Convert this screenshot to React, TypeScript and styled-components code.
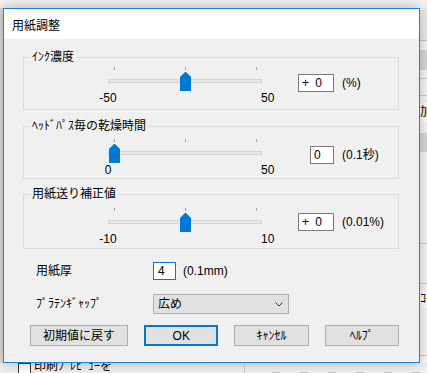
import React from "react";
import styled, { createGlobalStyle } from "styled-components";

const FONT = `"Liberation Sans", "Noto Sans CJK JP", sans-serif`;

const Global = createGlobalStyle`
  html, body { margin: 0; padding: 0; }
  body {
    width: 427px; height: 373px; overflow: hidden;
    background: #f0f0f0;
    font-family: ${FONT};
  }
`;

/* ---------- background (window behind the dialog) ---------- */
const Desktop = styled.div`
  position: relative;
  width: 427px;
  height: 373px;
  overflow: hidden;
  display: flex;
  flex-direction: column;
  background: #f0f0f0;
  font-family: ${FONT};
  font-size: 12px;
  color: #000;
`;
const TopBand = styled.div`
  flex: none;
  height: 8px;
  background: #f2f2f2;
`;
const MidRow = styled.div`
  flex: none;
  height: 355px;
  display: flex;
`;
const LeftEdge = styled.div`
  width: 3px;
  background: #dcdcdc;
`;
const Covered = styled.div`
  flex: 1;
  background: #ffffff;
`;
const RightStrip = styled.div`
  width: 7px;
  display: flex;
  flex-direction: column;
  background: #f7f7f7;
  overflow: hidden;
`;
const StripPiece = styled.div<{ $h: number; $bg?: string }>`
  flex: none;
  height: ${(p) => p.$h}px;
  background: ${(p) => p.$bg ?? "transparent"};
  font-size: 12px;
  line-height: ${(p) => p.$h}px;
  white-space: nowrap;
`;
const BottomRow = styled.div`
  flex: none;
  height: 10px;
  display: flex;
  align-items: flex-start;
  background: #f0f0f0;
`;
const CheckBox = styled.div`
  flex: none;
  width: 13px;
  height: 13px;
  margin-left: 18px;
  box-sizing: border-box;
  border: 1px solid #333;
  background: #fff;
`;
const CheckText = styled.div`
  flex: none;
  width: 210px;
  margin-left: 3px;
  margin-top: -4px;
  font-size: 12px;
  line-height: 14px;
  white-space: nowrap;
`;
const VLine = styled.div`
  flex: none;
  width: 1px;
  height: 10px;
  background: #d0d0d0;
`;
const Squares = styled.div`
  flex: none;
  display: flex;
  gap: 20px;
  margin-left: 27px;
  margin-top: 9px;
`;
const Square = styled.div`
  width: 8px;
  height: 8px;
  background: #c4c4c4;
`;

/* ---------- dialog ---------- */
const Dialog = styled.div`
  position: absolute;
  left: 3px;
  top: 8px;
  width: 417px;
  height: 355px;
  box-sizing: border-box;
  border: 1px solid #1883d7;
  background: #f0f0f0;
  box-shadow: 0 0 12px rgba(0, 0, 0, 0.28);
  display: flex;
  flex-direction: column;
`;
const TitleBar = styled.div`
  flex: none;
  height: 30px;
  background: #ffffff;
  display: flex;
  align-items: center;
  padding-left: 8px;
  font-family: "Noto Sans CJK JP", sans-serif;
  font-size: 12px;
  color: #000;
`;
const Body = styled.div`
  flex: 1;
  display: flex;
  flex-direction: column;
  padding: 10px 20px 0 19px;
`;

const Group = styled.fieldset<{ $mt: number }>`
  margin: ${(p) => p.$mt}px 0 0 0;
  padding: 0;
  min-width: 0;
  border: 1px solid #dcdcdc;
`;
const Legend = styled.legend`
  margin-left: 6px;
  padding: 0 2px;
  font-size: 12px;
  line-height: 16px;
  color: #000;
`;
const GroupRow = styled.div<{ $pt: number; $pb: number }>`
  display: flex;
  align-items: flex-start;
  padding: ${(p) => p.$pt}px 0 ${(p) => p.$pb}px 84px;
`;

/* trackbar */
const TrackWrap = styled.div`
  flex: none;
  width: 154px;
`;
const TrackArea = styled.div`
  position: relative;
  height: 25px;
`;
const Tick = styled.div`
  position: absolute;
  top: 0;
  width: 1px;
  height: 3px;
  background: #a8a8a8;
`;
const TrackLine = styled.div`
  position: absolute;
  left: 0;
  right: 0;
  top: 12px;
  height: 4px;
  box-sizing: border-box;
  border: 1px solid #d6d6d6;
  background: #e7e7e7;
`;
const ThumbSvg = styled.svg`
  position: absolute;
  top: 5px;
  display: block;
`;
const ScaleRow = styled.div`
  display: grid;
  grid-template-columns: 30px 1fr 30px;
  margin: 0 -29px 0 -15px;
  height: 12px;
  line-height: 12px;
  font-size: 12px;
`;
const ScaleMin = styled.span`
  text-align: center;
`;
const ScaleMax = styled.span`
  grid-column: 3;
  text-align: left;
`;

/* edits */
const EditGroup = styled.div<{ $mt: number }>`
  display: flex;
  align-items: center;
  margin-top: ${(p) => p.$mt}px;
`;
const EditSlot = styled.div`
  flex: none;
  width: 72px;
  display: flex;
  justify-content: flex-end;
`;
const EditBox = styled.div<{ $w: number; $focus?: boolean }>`
  box-sizing: border-box;
  width: ${(p) => p.$w}px;
  height: 18px;
  border: 1px solid ${(p) => (p.$focus ? "#0078d7" : "#7a7a7a")};
  background: #fff;
  padding-left: ${(p) => (p.$focus ? 4 : 3)}px;
  font-size: 12px;
  line-height: 16px;
  word-spacing: 3px;
  white-space: pre;
`;
const Unit = styled.span<{ $ml: number }>`
  margin-left: ${(p) => p.$ml}px;
  font-size: 12px;
  line-height: 16px;
  white-space: nowrap;
`;

/* lower rows */
const FieldRow = styled.div<{ $mt: number }>`
  display: flex;
  align-items: center;
  margin-top: ${(p) => p.$mt}px;
  padding-left: 13px;
`;
const FieldLabel = styled.span`
  flex: none;
  width: 117px;
  font-size: 12px;
  line-height: 16px;
  white-space: nowrap;
`;
const Combo = styled.div`
  box-sizing: border-box;
  width: 136px;
  height: 20px;
  border: 1px solid #adadad;
  background: #e1e1e1;
  display: flex;
  align-items: center;
  justify-content: space-between;
  padding: 0 5px 0 4px;
  font-size: 12px;
  line-height: 16px;
`;
const ButtonRow = styled.div`
  display: flex;
  gap: 16px;
  margin-top: 11px;
  padding-left: 7px;
`;
const Button = styled.button<{ $w: number; $default?: boolean }>`
  box-sizing: border-box;
  width: ${(p) => p.$w}px;
  height: 21px;
  margin: 0;
  padding: 0;
  border: ${(p) => (p.$default ? "2px solid #0078d7" : "1px solid #adadad")};
  background: #e1e1e1;
  font-family: ${FONT};
  font-size: 12px;
  line-height: 16px;
  color: #000;
`;

type SliderProps = { min: number; max: number; value: number };
const Trackbar: React.FC<SliderProps> = ({ min, max, value }) => {
  const ticks = [6, 77, 148];
  const frac = (value - min) / (max - min);
  const thumbLeft = Math.round(6 + frac * 142 - 5.5);
  return (
    <TrackWrap>
      <TrackArea>
        {ticks.map((t) => (
          <Tick key={t} style={{ left: t }} />
        ))}
        <TrackLine />
        <ThumbSvg width="11" height="19" viewBox="0 0 11 19" style={{ left: thumbLeft }}>
          <path d="M0 5 L5 0 L6 0 L11 5 V19 H0 Z" fill="#0078d7" />
        </ThumbSvg>
      </TrackArea>
      <ScaleRow>
        <ScaleMin>{min}</ScaleMin>
        <ScaleMax>{max}</ScaleMax>
      </ScaleRow>
    </TrackWrap>
  );
};

type GroupDef = {
  title: string;
  min: number;
  max: number;
  value: number;
  text: string;
  editW: number;
  unit: string;
  mt: number;
  pt: number;
  pb: number;
  editTop: number;
};

const groups: GroupDef[] = [
  { title: "ｲﾝｸ濃度", min: -50, max: 50, value: 0, text: "+ 0", editW: 36, unit: "(%)", mt: 0, pt: 2, pb: 5, editTop: 7 },
  { title: "ﾍｯﾄﾞﾊﾟｽ毎の乾燥時間", min: 0, max: 50, value: 0, text: "0", editW: 24, unit: "(0.1秒)", mt: 8, pt: 5, pb: 2, editTop: 7 },
  { title: "用紙送り補正値", min: -10, max: 10, value: 0, text: "+ 0", editW: 36, unit: "(0.01%)", mt: 7, pt: 6, pb: 3, editTop: 5 },
];

export default function App() {
  return (
    <>
      <Global />
      <Desktop>
        <TopBand />
        <MidRow>
          <LeftEdge />
          <Covered />
          <RightStrip>
            <StripPiece $h={32} $bg="#ececec" />
            <StripPiece $h={1} $bg="#c8c8c8" />
            <StripPiece $h={9} />
            <StripPiece $h={20} $bg="#d9d9d9" />
            <StripPiece $h={8} />
            <StripPiece $h={1} $bg="#d0d0d0" />
            <StripPiece $h={16} />
            <StripPiece $h={1} $bg="#d0d0d0" />
            <StripPiece $h={7} />
            <StripPiece $h={19} $bg="#ffffff">加</StripPiece>
            <StripPiece $h={11} />
            <StripPiece $h={19} $bg="#d9d9d9" />
            <StripPiece $h={91} />
            <StripPiece $h={1} $bg="#d0d0d0" />
            <StripPiece $h={39} />
            <StripPiece $h={1} $bg="#d0d0d0" />
            <StripPiece $h={6} />
            <StripPiece $h={18} $bg="#ffffff">ｺｰ</StripPiece>
            <StripPiece $h={47} />
            <StripPiece $h={1} $bg="#d0d0d0" />
          </RightStrip>
        </MidRow>
        <BottomRow>
          <CheckBox />
          <CheckText>印刷ﾌﾟﾚﾋﾞｭｰを</CheckText>
          <VLine />
          <Squares>
            {[0, 1, 2, 3, 4, 5].map((i) => (
              <Square key={i} />
            ))}
          </Squares>
        </BottomRow>

        <Dialog>
          <TitleBar>用紙調整</TitleBar>
          <Body>
            {groups.map((g) => (
              <Group key={g.title} $mt={g.mt}>
                <Legend>{g.title}</Legend>
                <GroupRow $pt={g.pt} $pb={g.pb}>
                  <Trackbar min={g.min} max={g.max} value={g.value} />
                  <EditGroup $mt={g.editTop}>
                    <EditSlot>
                      <EditBox $w={g.editW}>{g.text}</EditBox>
                    </EditSlot>
                    <Unit $ml={8}>{g.unit}</Unit>
                  </EditGroup>
                </GroupRow>
              </Group>
            ))}

            <FieldRow $mt={13}>
              <FieldLabel>用紙厚</FieldLabel>
              <EditBox $w={23} $focus>4</EditBox>
              <Unit $ml={7}>(0.1mm)</Unit>
            </FieldRow>

            <FieldRow $mt={14}>
              <FieldLabel>ﾌﾟﾗﾃﾝｷﾞｬｯﾌﾟ</FieldLabel>
              <Combo>
                <span>広め</span>
                <svg width="8" height="5" viewBox="0 0 8 5">
                  <polyline points="0.5,0.5 4,4 7.5,0.5" fill="none" stroke="#333" strokeWidth="1" />
                </svg>
              </Combo>
            </FieldRow>

            <ButtonRow>
              <Button $w={99}>初期値に戻す</Button>
              <Button $w={75} $default>OK</Button>
              <Button $w={75}>ｷｬﾝｾﾙ</Button>
              <Button $w={75}>ﾍﾙﾌﾟ</Button>
            </ButtonRow>
          </Body>
        </Dialog>
      </Desktop>
    </>
  );
}
